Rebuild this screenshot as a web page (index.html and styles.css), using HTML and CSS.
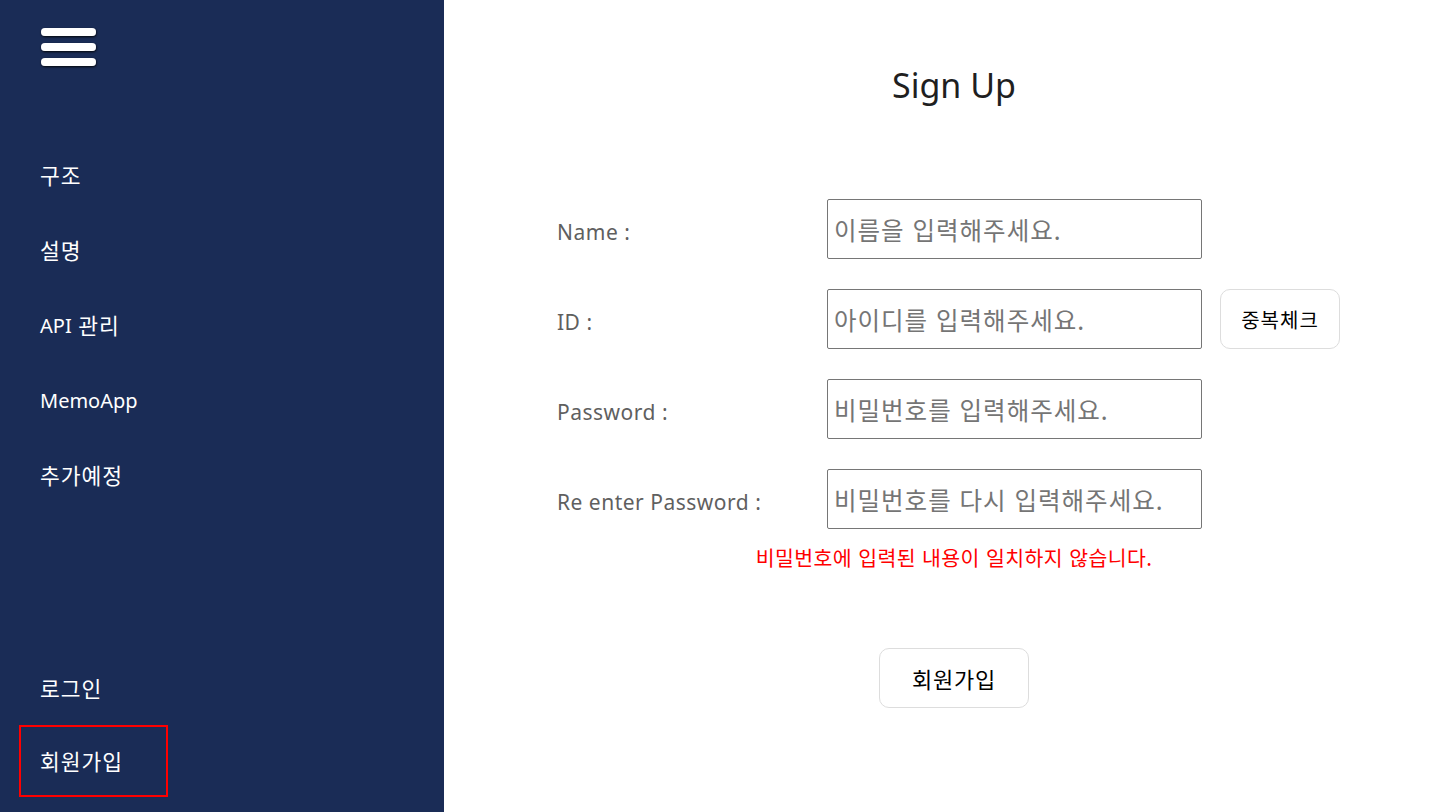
FILE: index.html
```html
<!DOCTYPE html>
<html lang="ko">
<head>
<meta charset="utf-8">
<title>Sign Up</title>
<link rel="stylesheet" href="styles.css">
</head>
<body>
<div class="app">
  <aside class="sidebar">
    <button class="menu-btn" aria-label="menu">
      <svg width="60" height="46" viewBox="0 0 60 46">
        <defs>
          <filter id="sh" x="-20%" y="-50%" width="140%" height="200%">
            <feDropShadow dx="0.5" dy="1" stdDeviation="0.8" flood-color="#000" flood-opacity="0.9"/>
          </filter>
        </defs>
        <g filter="url(#sh)" fill="#ffffff">
          <rect x="2" y="1" width="55" height="8" rx="4"/>
          <rect x="2" y="16" width="55" height="8" rx="4"/>
          <rect x="2" y="31" width="55" height="8" rx="4"/>
        </g>
      </svg>
    </button>
    <nav class="nav-top">
      <a class="nav-item">구조</a>
      <a class="nav-item">설명</a>
      <a class="nav-item"><span class="lat">API</span>&nbsp;관리</a>
      <a class="nav-item lat">MemoApp</a>
      <a class="nav-item">추가예정</a>
    </nav>
    <nav class="nav-bottom">
      <a class="nav-item">로그인</a>
      <a class="nav-item active">회원가입</a>
    </nav>
  </aside>
  <main class="main">
    <h1 class="title">Sign Up</h1>
    <form class="form">
      <label class="label">Name :</label>
      <input class="field" type="text" placeholder="이름을 입력해주세요.">
      <span></span>
      <label class="label">ID :</label>
      <input class="field" type="text" placeholder="아이디를 입력해주세요.">
      <button type="button" class="btn btn-check">중복체크</button>
      <label class="label">Password :</label>
      <input class="field" type="password" placeholder="비밀번호를 입력해주세요.">
      <span></span>
      <label class="label">Re enter Password :</label>
      <input class="field" type="password" placeholder="비밀번호를 다시 입력해주세요.">
      <span></span>
    </form>
    <p class="error">비밀번호에 입력된 내용이 일치하지 않습니다.</p>
    <button type="button" class="btn btn-submit">회원가입</button>
  </main>
</div>
</body>
</html>
```

FILE: styles.css
```css
* { box-sizing: border-box; }
html, body { margin: 0; padding: 0; }
body {
  font-family: "Noto Sans", "Noto Sans CJK KR", sans-serif;
  background: #ffffff;
  width: 1441px;
  height: 812px;
  overflow: hidden;
}
.app {
  display: flex;
  height: 812px;
}
.sidebar {
  width: 444px;
  flex: 0 0 444px;
  background: #1a2c56;
  display: flex;
  flex-direction: column;
  color: #ffffff;
}
.menu-btn {
  border: 0;
  background: transparent;
  padding: 0;
  margin: 27px 0 0 39px;
  width: 60px;
  height: 46px;
  display: block;
}
.menu-btn svg { display: block; }
.nav-top {
  display: flex;
  flex-direction: column;
  margin-top: 65px;
}
.nav-item {
  display: flex;
  align-items: center;
  height: 75px;
  padding-left: 40px;
  font-size: 21.5px;
  letter-spacing: 1px;
  line-height: 28px;
  color: #ffffff;
  text-decoration: none;
}
.lat {
  font-size: 20px;
  letter-spacing: 0;
}
.nav-bottom {
  margin-top: auto;
  margin-bottom: 15px;
  display: flex;
  flex-direction: column;
}
.nav-bottom .nav-item { height: 72px; }
.nav-item.active {
  margin-left: 19px;
  width: 149px;
  padding-left: 19px;
  border: 2px solid #ff0000;
  padding-top: 2px;
}
.main {
  flex: 1;
  display: flex;
  flex-direction: column;
  align-items: center;
  padding-left: 23px;
}
.title {
  margin: 62px 0 0;
  font-size: 34px;
  line-height: 46px;
  font-weight: 400;
  color: #1f1f1f;
}
.form {
  align-self: flex-start;
  margin: 91px 0 0 90px;
  display: grid;
  grid-template-columns: 251px 375px 120px;
  grid-auto-rows: 60px;
  column-gap: 19px;
  row-gap: 30px;
  align-items: center;
}
.label {
  font-size: 21px;
  letter-spacing: 0.5px;
  color: #5f5f5f;
  padding-top: 5px;
}
.field {
  width: 375px;
  height: 60px;
  border: 1px solid #767676;
  border-radius: 2px;
  padding: 0 6px;
  font-family: "Noto Sans CJK KR", "Noto Sans", sans-serif;
  font-size: 24.5px;
  letter-spacing: 1px;
  color: #333;
  outline: none;
}
.field::placeholder { color: #757575; }
.btn {
  background: #ffffff;
  border: 1px solid #dddddd;
  border-radius: 10px;
  font-family: "Noto Sans CJK KR", "Noto Sans", sans-serif;
  color: #000;
  padding: 0;
}
.btn-check {
  width: 120px;
  height: 60px;
  margin-left: -1px;
  font-size: 20px;
  letter-spacing: 1px;
}
.error {
  margin: 15px 0 0;
  font-family: "Noto Sans CJK KR", "Noto Sans", sans-serif;
  font-size: 20.5px;
  letter-spacing: 0.4px;
  line-height: 26px;
  color: #ff0000;
}
.btn-submit {
  margin-top: 78px;
  width: 150px;
  height: 60px;
  font-size: 22px;
  letter-spacing: 0.8px;
}
```
